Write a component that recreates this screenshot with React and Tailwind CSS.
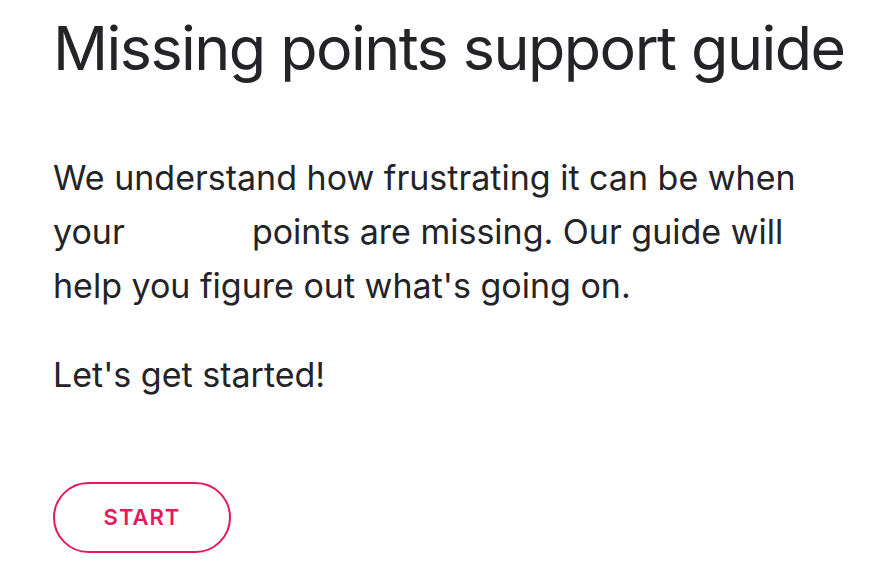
export default function App() {
  return (
    <div className="min-h-screen bg-white px-[53px] pt-[12px] text-[#232328] [font-family:Inter,'Noto_Sans',sans-serif]">
      <h1 className="whitespace-nowrap text-[61px] font-normal leading-[72px] tracking-[-1.55px]">
        Missing points support guide
      </h1>

      <p className="mt-[67px] text-[34px] leading-[54px]">
        We understand how frustrating it can be when your{' '}
        <span className="inline-block w-[108px]" /> points are missing. Our guide will help you figure out
        what's going on.
      </p>

      <p className="mt-[35px] text-[34px] leading-[54px]">Let's get started!</p>

      <button
        type="button"
        className="mt-[80px] flex h-[71px] w-[178px] items-center justify-center rounded-full border-2 border-[#e8195a] text-[22px] font-semibold tracking-[1px] text-[#e8195a]"
      >
        START
      </button>
    </div>
  );
}
